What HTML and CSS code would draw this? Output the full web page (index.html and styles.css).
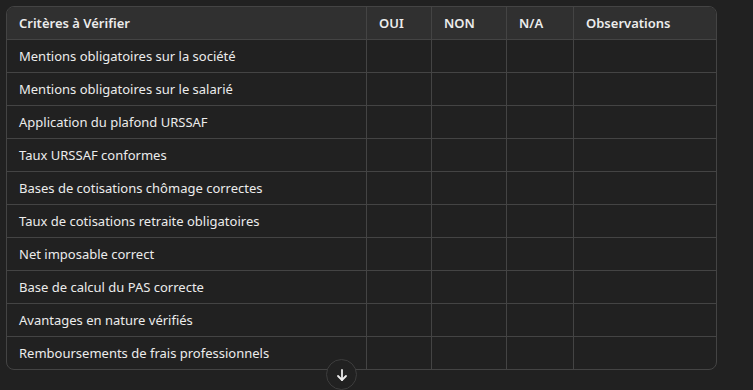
FILE: index.html
```html
<!DOCTYPE html>
<html lang="fr">
<head>
  <meta charset="UTF-8" />
  <meta name="viewport" content="width=device-width, initial-scale=1" />
  <title>Checklist bulletin de paie</title>
  <link rel="stylesheet" href="styles.css">
</head>
<body>

<div class="page">
  <div class="table-wrap">
    <table class="checklist">
      <colgroup>
        <col class="col-critere">
        <col class="col-oui">
        <col class="col-non">
        <col class="col-na">
        <col class="col-obs">
      </colgroup>
      <thead>
        <tr>
          <th>Critères à Vérifier</th>
          <th>OUI</th>
          <th>NON</th>
          <th>N/A</th>
          <th>Observations</th>
        </tr>
      </thead>
      <tbody>
        <tr><td>Mentions obligatoires sur la société</td><td></td><td></td><td></td><td></td></tr>
        <tr><td>Mentions obligatoires sur le salarié</td><td></td><td></td><td></td><td></td></tr>
        <tr><td>Application du plafond URSSAF</td><td></td><td></td><td></td><td></td></tr>
        <tr><td>Taux URSSAF conformes</td><td></td><td></td><td></td><td></td></tr>
        <tr><td>Bases de cotisations chômage correctes</td><td></td><td></td><td></td><td></td></tr>
        <tr><td>Taux de cotisations retraite obligatoires</td><td></td><td></td><td></td><td></td></tr>
        <tr><td>Net imposable correct</td><td></td><td></td><td></td><td></td></tr>
        <tr><td>Base de calcul du PAS correcte</td><td></td><td></td><td></td><td></td></tr>
        <tr><td>Avantages en nature vérifiés</td><td></td><td></td><td></td><td></td></tr>
        <tr><td>Remboursements de frais professionnels</td><td></td><td></td><td></td><td></td></tr>
      </tbody>
    </table>
  </div>

  <button class="scroll-down" aria-label="Défiler vers le bas">
    <svg width="16" height="16" viewBox="0 0 16 16" fill="none" stroke="currentColor" stroke-width="1.8" stroke-linecap="round" stroke-linejoin="round">
      <path d="M8 3v10"/>
      <path d="M4 9l4 4 4-4"/>
    </svg>
  </button>
</div>

</body>
</html>
```

FILE: styles.css
```css
body {
  margin: 0;
  background: #212121;
  color: #ececec;
  font-family: 'Noto Sans', 'DejaVu Sans', sans-serif;
  font-size: 13px;
}

.page {
  position: relative;
  padding: 6px 0 0 6px;
  width: 711px;
  height: 384px;
}

.table-wrap {
  border: 1px solid #444;
  border-radius: 8px;
  overflow: hidden;
}

.checklist {
  width: 100%;
  border-collapse: separate;
  border-spacing: 0;
  table-layout: fixed;
}

.col-critere { width: 359px; }
.col-oui { width: 65px; }
.col-non { width: 75px; }
.col-na { width: 67px; }

th, td {
  height: 32px;
  padding: 0 12px;
  text-align: left;
  border-left: 1px solid #444;
  border-bottom: 1px solid #444;
  white-space: nowrap;
}

th:first-child, td:first-child {
  border-left: none;
}

tbody tr:last-child td {
  border-bottom: none;
}

th {
  background: #303030;
  font-weight: 600;
}

.scroll-down {
  position: absolute;
  left: 326px;
  top: 359px;
  width: 31px;
  height: 31px;
  border-radius: 50%;
  border: 1px solid #3d3d3d;
  background: #212121;
  color: #ececec;
  display: flex;
  align-items: center;
  justify-content: center;
  padding: 0;
  cursor: pointer;
}
```
